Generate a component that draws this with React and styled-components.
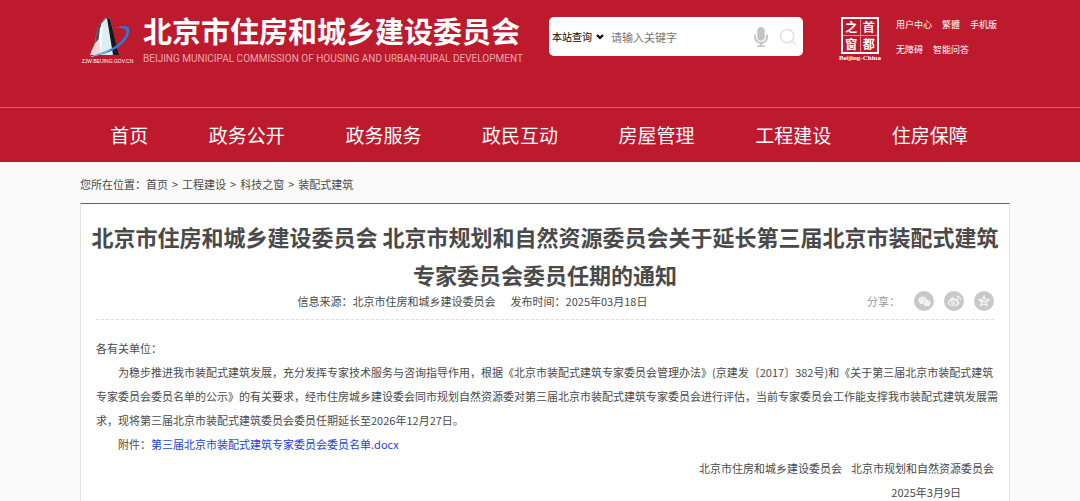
import React from 'react';
import styled, { createGlobalStyle } from 'styled-components';
import { FaMicrophone, FaWeixin, FaWeibo } from 'react-icons/fa';
import { FiSearch } from 'react-icons/fi';

const navItems = ['首页', '政务公开', '政务服务', '政民互动', '房屋管理', '工程建设', '住房保障'];
const crumbs = ['首页', '工程建设', '科技之窗', '装配式建筑'];
const topLinks = [['用户中心', '繁體', '手机版'], ['无障碍', '智能问答']];

function QzoneStar() {
    return (
        <svg width="14" height="14" viewBox="0 0 24 24" aria-hidden="true">
            <path d="M12 1 L15.3 8.3 L23 9.2 L17.2 14.4 L18.9 22.3 L12 18.2 L5.1 22.3 L6.8 14.4 L1 9.2 L8.7 8.3 Z" fill="currentColor" strokeLinejoin="round" />
            <path d="M8 10 Q12 9 16 10 L9 15.500 Q13 16.500 18 15" fill="none" stroke="#c8c8c8" strokeWidth="1.600" />
        </svg>
    );
}

const shares = [
    { label: '微信', icon: <FaWeixin /> },
    { label: '微博', icon: <FaWeibo /> },
    { label: 'QQ空间', icon: <QzoneStar /> },
];

function Building() {
    return (
        <svg width="55" height="42" viewBox="0 0 55 42" aria-hidden="true">
            <path d="M18 10 L26 1 L30 2 L39 39 L12 39 Z" fill="#8b8f92" />
            <path d="M26 1 L30 3 L39 39 L31 39 Z" fill="#15181c" />
            <path d="M18 10 L23 5 L22 36 L13 39 Z" fill="#574a50" />
            <path d="M21 8 L27 2 L33 39 L20 39 Z" fill="#d9eeed" />
            <path d="M20 12 L23 9 L21 36 L17 38 Z" fill="#fff" />
            <path d="M10 39 Q14 27 19 23 L21 39 Z" fill="#f2d5d8" />
            <path d="M34 12 Q46 8 49 12 Q51 22 37 32 Q26 39 8 41 Q28 36 38 28 Q48 19 46 14 Q43 11 34 12 Z" fill="#2f78cf" />
            <path d="M8 41 Q24 38 34 31 Q25 39 8 41 Z" fill="#b9d3f0" />
        </svg>
    );
}

function Header() {
    return (
        <HeaderWrapper>
            <Container>
                <TopBar>
                    <Brand href="#">
                        <Emblem>
                            <Building />
                            <span>ZJW.BEIJING.GOV.CN</span>
                        </Emblem>
                        <BrandText>
                            <strong>北京市住房和城乡建设委员会</strong>
                            <small>BEIJING MUNICIPAL COMMISSION OF HOUSING AND URBAN-RURAL DEVELOPMENT</small>
                        </BrandText>
                    </Brand>
                    <SearchForm role="search" onSubmit={(e) => e.preventDefault()}>
                        <SearchScope aria-label="查询范围">
                            <option>本站查询</option>
                        </SearchScope>
                        <svg width="8" height="6" viewBox="0 0 8 6" aria-hidden="true">
                            <path d="M1 1 L4 4 L7 1" fill="none" stroke="#000" strokeWidth="2" />
                        </svg>
                        <SearchInput type="text" aria-label="关键字" placeholder="请输入关键字" />
                        <IconButton type="button" aria-label="语音" $color="#c4c4c4"><FaMicrophone /></IconButton>
                        <IconButton type="submit" aria-label="搜索" $color="#e3e3e3"><FiSearch /></IconButton>
                    </SearchForm>
                    <Capital href="#">
                        <Seal>
                            <b>之</b><b>首</b><b>窗</b><b>都</b>
                        </Seal>
                        <span>Beijing-China</span>
                    </Capital>
                    <TopLinks>
                        {topLinks.map((row) => (
                            <div key={row[0]}>
                                {row.map((text) => <a href="#" key={text}>{text}</a>)}
                            </div>
                        ))}
                    </TopLinks>
                </TopBar>
            </Container>
            <NavBar>
                <Container>
                    <NavList>
                        {navItems.map((item) => (
                            <li key={item}><a href="#">{item}</a></li>
                        ))}
                    </NavList>
                </Container>
            </NavBar>
        </HeaderWrapper>
    );
}

function Notice() {
    return (
        <Card>
            <Title>
                北京市住房和城乡建设委员会 北京市规划和自然资源委员会关于延长第三届北京市装配式建筑
                <br />
                专家委员会委员任期的通知
            </Title>
            <MetaRow>
                <Meta>
                    <span>信息来源：北京市住房和城乡建设委员会</span>
                    <span>发布时间：2025年03月18日</span>
                </Meta>
                <Share>
                    <span>分享：</span>
                    {shares.map((s) => (
                        <ShareButton type="button" key={s.label} aria-label={s.label}>{s.icon}</ShareButton>
                    ))}
                </Share>
            </MetaRow>
            <Content>
                <p>各有关单位：</p>
                <Indented>
                    为稳步推进我市装配式建筑发展，充分发挥专家技术服务与咨询指导作用，根据《北京市装配式建筑专家委员会管理办法》(京建发〔2017〕382号)和《关于第三届北京市装配式建筑
                    <br />
                    专家委员会委员名单的公示》的有关要求，经市住房城乡建设委会同市规划自然资源委对第三届北京市装配式建筑专家委员会进行评估，当前专家委员会工作能支撑我市装配式建筑发展需
                    <br />
                    求，现将第三届北京市装配式建筑委员会委员任期延长至2026年12月27日。
                </Indented>
                <Indented>附件：<a href="#">第三届北京市装配式建筑专家委员会委员名单.docx</a></Indented>
                <Signature>
                    <span>北京市住房和城乡建设委员会</span>
                    <span>北京市规划和自然资源委员会</span>
                </Signature>
                <SignDate>2025年3月9日</SignDate>
            </Content>
        </Card>
    );
}

export default function App() {
    return (
        <>
            <GlobalStyle />
            <Header />
            <Container as="main">
                <Breadcrumb aria-label="您所在位置">
                    <span>您所在位置：</span>
                    {crumbs.map((c, i) => (
                        <React.Fragment key={c}>
                            {i > 0 && <Separator>&gt;</Separator>}
                            <a href="#">{c}</a>
                        </React.Fragment>
                    ))}
                </Breadcrumb>
                <Notice />
            </Container>
        </>
    );
}

const GlobalStyle = createGlobalStyle`
    *{
        box-sizing:border-box;
    }
    html{
        scrollbar-width:none;
    }
    body{
        margin:0;
        background:#fafafa;
        color:#4a4a4a;
        font-family:"Noto Sans CJK SC",sans-serif;
        font-size:11px;
    }
    a{
        color:inherit;
        text-decoration:none;
    }
    p{
        margin:0;
    }
    button,input,select{
        font-family:inherit;
    }
`

const Container = styled.div`
    padding:0 70px 0 80px;
`

const HeaderWrapper = styled.header`
    background:#bd1a2d;
    color:#fff;
`

const TopBar = styled.div`
    display:flex;
    align-items:flex-start;
    height:107px;
    padding-top:16px;
`

const Brand = styled.a`
    display:flex;
    gap:8px;
    width:469px;
`

const Emblem = styled.span`
    display:flex;
    flex-direction:column;
    align-items:center;
    width:55px;
    span{
        font:5px/7px "Liberation Sans",sans-serif;
        white-space:nowrap;
    }
`

const BrandText = styled.span`
    display:flex;
    flex-direction:column;
    white-space:nowrap;
    strong{
        font-size:29px;
        line-height:28px;
        font-weight:700;
    }
    small{
        margin-top:8px;
        color:#e9a9b0;
        font:10px/14px Roboto,sans-serif;
    }
`

const SearchForm = styled.form`
    display:flex;
    align-items:center;
    width:254px;
    height:39px;
    margin-top:1px;
    padding:0 2px 0 3px;
    border-radius:5px;
    background:#fff;
`

const SearchScope = styled.select`
    appearance:none;
    width:44px;
    padding:0;
    border:0;
    background:none;
    color:#000;
    font-size:10px;
`

const SearchInput = styled.input`
    flex:1;
    min-width:0;
    padding:0 0 0 7px;
    border:0;
    outline:0;
    background:none;
    font-size:11px;
    &::placeholder{
        color:#757575;
    }
`

const IconButton = styled.button`
    display:flex;
    justify-content:center;
    width:27px;
    padding:0;
    border:0;
    background:none;
    color:${props => props.$color};
    font-size:20px;
`

const Capital = styled.a`
    display:flex;
    flex-direction:column;
    align-items:center;
    width:44px;
    margin:1px 0 0 35px;
    > span:last-child{
        font:bold 7px/8px "Liberation Serif",serif;
        white-space:nowrap;
    }
`

const Seal = styled.span`
    display:grid;
    grid-template-columns:1fr 1fr;
    grid-template-rows:1fr 1fr;
    gap:1px;
    width:38px;
    height:37px;
    border:2px solid #fff;
    background:#de8c96;
    b{
        background:#bd1a2d;
        font-size:12px;
        line-height:16px;
        font-weight:700;
        text-align:center;
    }
`

const TopLinks = styled.div`
    display:flex;
    flex-direction:column;
    gap:11px;
    margin-left:14px;
    padding-top:2px;
    font-size:9px;
    line-height:14px;
    div{
        display:flex;
        gap:10px;
    }
`

const NavBar = styled.nav`
    border-top:1px solid #d0616e;
`

const NavList = styled.ul`
    display:flex;
    margin:0;
    padding:0 12px 0 0;
    list-style:none;
    li{
        flex:1 0 auto;
        padding:0 30px;
        font-size:19px;
        line-height:54px;
        text-align:center;
    }
`

const Breadcrumb = styled.nav`
    display:flex;
    padding:12px 0 9px;
    line-height:20px;
`

const Separator = styled.span`
    margin:0 4px;
`

const Card = styled.article`
    padding:13px 10px 0;
    border:1px solid #e3e3e3;
    border-top-color:#c8384a;
    background:#fff;
`

const Title = styled.h1`
    margin:0;
    font-size:22px;
    line-height:38px;
    text-align:center;
    white-space:nowrap;
`

const MetaRow = styled.div`
    display:grid;
    grid-template-columns:1fr auto;
    align-items:flex-start;
    gap:18px;
    height:29px;
    margin:-2px 5px 0;
    border-bottom:1px dashed #ddd;
    line-height:20px;
`

const Meta = styled.div`
    display:flex;
    justify-content:center;
    gap:15px;
`

const Share = styled.div`
    display:flex;
    align-items:center;
    gap:10px;
    color:#999;
    span{
        margin-right:4px;
    }
`

const ShareButton = styled.button`
    display:flex;
    align-items:center;
    justify-content:center;
    width:20px;
    height:20px;
    padding:0;
    border:0;
    border-radius:50%;
    background:#c8c8c8;
    color:#f4f4f4;
    font-size:13px;
`

const Content = styled.div`
    padding:16px 5px 0;
    line-height:24px;
    white-space:nowrap;
`

const Indented = styled.p`
    text-indent:2em;
    a{
        color:#1a44d8;
    }
`

const Signature = styled.p`
    display:flex;
    justify-content:flex-end;
    gap:9px;
`

const SignDate = styled.p`
    padding-right:33px;
    text-align:right;
`
